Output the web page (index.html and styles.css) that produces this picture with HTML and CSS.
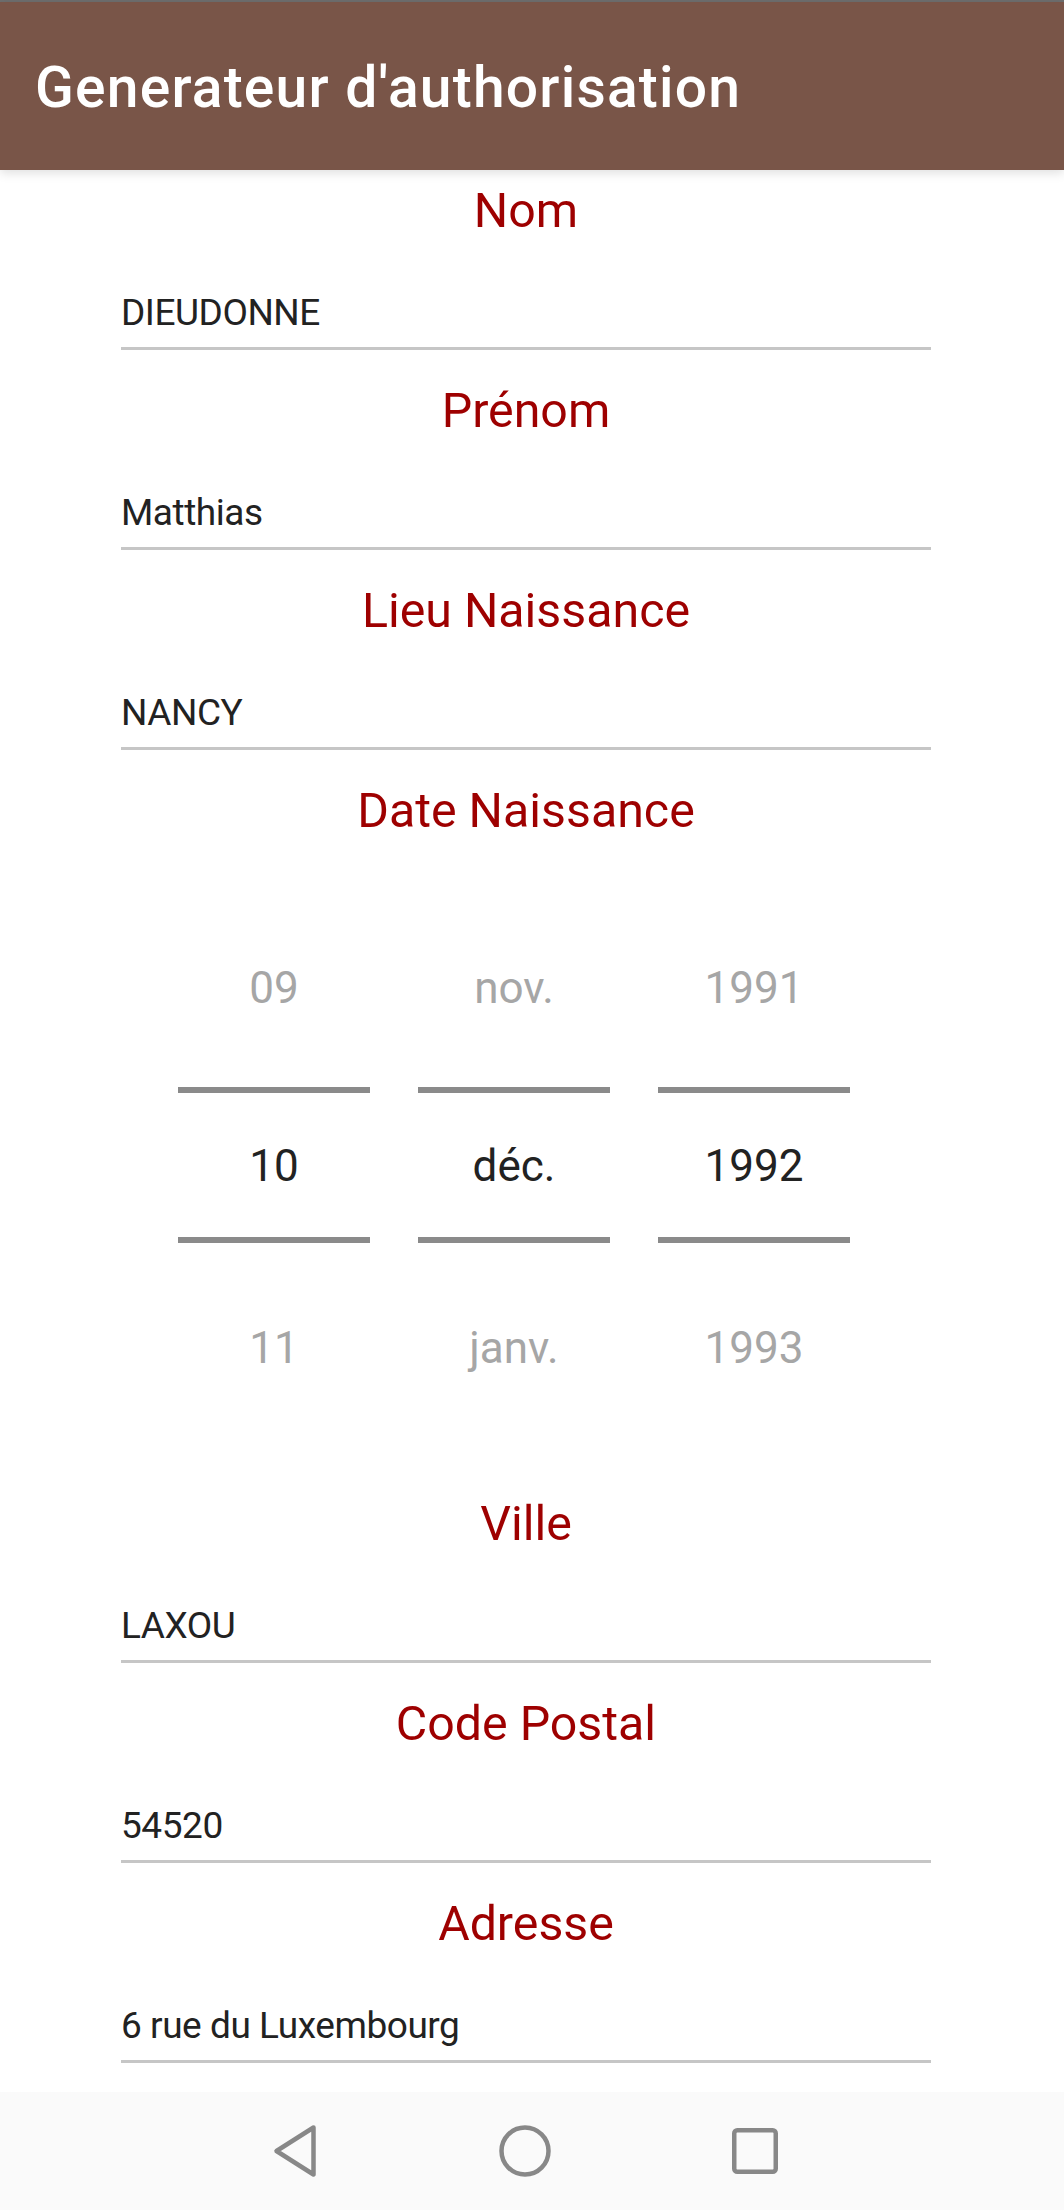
FILE: index.html
```html
<!DOCTYPE html>
<html lang="fr">
<head>
<meta charset="utf-8">
<title>Generateur d'authorisation</title>
<link rel="stylesheet" href="styles.css">
</head>
<body>
<div class="statusline"></div>
<header class="appbar">
  <h1 class="title">Generateur d'authorisation</h1>
</header>
<main class="form">
  <div class="field field-first">
    <div class="label">Nom</div>
    <div class="input">DIEUDONNE</div>
  </div>
  <div class="field">
    <div class="label">Prénom</div>
    <div class="input">Matthias</div>
  </div>
  <div class="field">
    <div class="label">Lieu Naissance</div>
    <div class="input">NANCY</div>
  </div>
  <div class="field-date">
    <div class="label">Date Naissance</div>
    <div class="picker">
      <div class="pcol">
        <div class="pcell dim">09</div>
        <div class="pcell sel">10</div>
        <div class="pcell dim">11</div>
      </div>
      <div class="pcol">
        <div class="pcell dim">nov.</div>
        <div class="pcell sel">déc.</div>
        <div class="pcell dim">janv.</div>
      </div>
      <div class="pcol">
        <div class="pcell dim">1991</div>
        <div class="pcell sel">1992</div>
        <div class="pcell dim">1993</div>
      </div>
    </div>
  </div>
  <div class="field">
    <div class="label">Ville</div>
    <div class="input">LAXOU</div>
  </div>
  <div class="field">
    <div class="label">Code Postal</div>
    <div class="input">54520</div>
  </div>
  <div class="field">
    <div class="label">Adresse</div>
    <div class="input">6 rue du Luxembourg</div>
  </div>
</main>
<nav class="navbar">
  <div class="navslot">
    <svg class="ico" width="48" height="56" viewBox="0 0 48 56"><path d="M42.5 4.5 L5.5 28 L42.5 51.5 Z" fill="none" stroke="#888888" stroke-width="4.5" stroke-linejoin="round"/></svg>
  </div>
  <div class="navslot">
    <svg class="ico" width="56" height="56" viewBox="0 0 56 56"><circle cx="28" cy="28" r="23.5" fill="none" stroke="#888888" stroke-width="4.5"/></svg>
  </div>
  <div class="navslot">
    <svg class="ico" width="50" height="50" viewBox="0 0 50 50"><rect x="4.25" y="4.25" width="41.5" height="41.5" rx="3" fill="none" stroke="#888888" stroke-width="4.5"/></svg>
  </div>
</nav>
</body>
</html>
```
FILE: styles.css
```css
* { box-sizing: border-box; }
html, body { margin: 0; padding: 0; }
body {
  width: 1064px;
  height: 2210px;
  overflow: hidden;
  background: #ffffff;
  font-family: Roboto, "Noto Sans", "Liberation Sans", sans-serif;
  display: flex;
  flex-direction: column;
}
.statusline { height: 2px; background: #6e6e6e; flex: none; }
.appbar {
  position: relative;
  z-index: 1;
  flex: none;
  height: 168px;
  background: #795548;
  display: flex;
  align-items: center;
  padding-left: 35px;
  padding-top: 2px;
  box-shadow: 0 3px 10px rgba(0, 0, 0, 0.13);
}
.title {
  margin: 0;
  color: #ffffff;
  font-size: 57px;
  line-height: 57px;
  letter-spacing: 1.2px;
  font-weight: 500;
  white-space: nowrap;
}
.form {
  flex: none;
  width: 810px;
  margin-left: 121px;
}
.field { padding-top: 32px; }
.field-first { padding-top: 12px; }
.label {
  text-align: center;
  color: #9e0000;
  font-size: 48.3px;
  line-height: 57px;
  height: 57px;
}
.input {
  margin-top: 52px;
  font-size: 37px;
  letter-spacing: -0.45px;
  line-height: 44px;
  height: 59px;
  padding-bottom: 12px;
  color: #222222;
  border-bottom: 3px solid #c6c6c6;
  white-space: nowrap;
}
.field-date { padding-top: 32px; }
.picker {
  display: flex;
  gap: 48px;
  margin-top: 56px;
  margin-bottom: 28px;
  margin-left: 57px;
}
.pcol { width: 192px; display: flex; flex-direction: column; }
.pcell {
  height: 180px;
  display: flex;
  align-items: center;
  justify-content: center;
  font-size: 44px;
  line-height: 52px;
}
.pcell.dim { color: #a6a6a6; padding-top: 6px; }
.pcell.sel {
  color: #222222;
  height: 156px;
  margin: 12px 0;
  padding-top: 2px;
  border-top: 6px solid #8a8a8a;
  border-bottom: 6px solid #8a8a8a;
}
.navbar {
  margin-top: auto;
  flex: none;
  height: 118px;
  background: #fafafa;
  display: flex;
  justify-content: center;
  align-items: center;
  padding-right: 14px;
}
.navslot {
  width: 230px;
  display: flex;
  justify-content: center;
  align-items: center;
}
.ico { display: block; }
```
